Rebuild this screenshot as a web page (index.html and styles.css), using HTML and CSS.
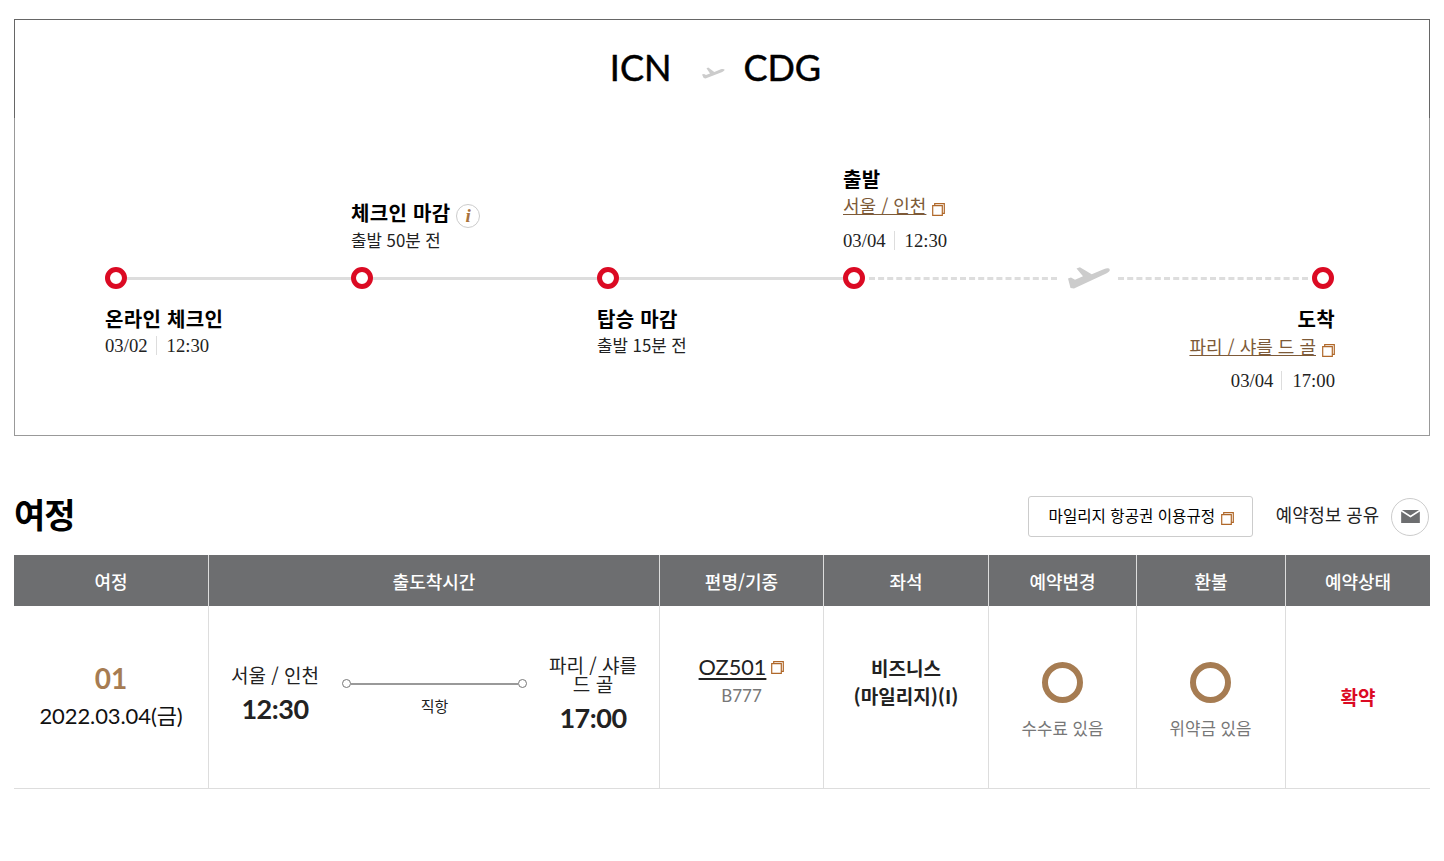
FILE: index.html
```html
<!DOCTYPE html>
<html lang="ko">
<head>
<meta charset="utf-8">
<title>여정</title>
<link rel="stylesheet" href="styles.css">
</head>
<body>
<section class="summary">
  <h1 class="route">
    <span>ICN</span>
    <svg class="route-plane" viewBox="0 0 24 14"><path d="M1 9.500 3 9l2 1 4-1.600L5.500 3.200 7.300 2.600l6 4.300 6.500-2.600c1.700-.6 3.300-.5 3.700.3.300.8-.6 1.700-2.200 2.400L4.500 13.500 2.700 13z"/></svg>
    <span>CDG</span>
  </h1>
  <div class="timeline">
    <div class="slot"></div>
    <div class="slot">
      <div class="title">체크인 마감 <span class="info">i</span></div>
      <div class="sub">출발 50분 전</div>
    </div>
    <div class="slot"></div>
    <div class="slot">
      <div class="title">출발</div>
      <div class="city-row"><a class="city">서울 / 인천</a><svg class="copy" viewBox="0 0 13 13"><path d="M.7 2.700h9.600v9.600H.7zM2.700 2.500V.7h9.600v9.600H10.500"/></svg></div>
      <div class="datetime"><span class="date">03/04</span><span>12:30</span></div>
    </div>
    <div class="slot"></div>

    <div class="track"><i class="dot"></i><i class="line"></i></div>
    <div class="track"><i class="dot"></i><i class="line"></i></div>
    <div class="track"><i class="dot"></i><i class="line"></i></div>
    <div class="track"><i class="dot"></i><i class="dash dash-left"></i>
      <svg class="track-plane" viewBox="0 0 44 24"><path d="M1 12.500 4 11.500l4 2.200 8-3.400L9.500 2.500l3.400-1.200 11.800 7 12.500-5.300c2.800-1.100 5-.8 5.500.4.500 1.300-1 2.800-3.500 4L7 22.500l-3.500-.5z"/></svg>
      <i class="dash"></i></div>
    <div class="track"><i class="dot"></i></div>

    <div class="slot below">
      <div class="title">온라인 체크인</div>
      <div class="datetime"><span class="date">03/02</span><span>12:30</span></div>
    </div>
    <div class="slot below"></div>
    <div class="slot below">
      <div class="title">탑승 마감</div>
      <div class="sub">출발 15분 전</div>
    </div>
    <div class="slot below arrive">
      <div class="title">도착</div>
      <div class="city-row"><a class="city">파리 / 샤를 드 골</a><svg class="copy" viewBox="0 0 13 13"><path d="M.7 2.700h9.600v9.600H.7zM2.700 2.500V.7h9.600v9.600H10.500"/></svg></div>
      <div class="datetime"><span class="date">03/04</span><span>17:00</span></div>
    </div>
  </div>
</section>

<section class="itinerary">
  <header class="it-head">
    <h2>여정</h2>
    <div class="it-actions">
      <button class="rule-btn">마일리지 항공권 이용규정<svg class="copy" viewBox="0 0 13 13"><path d="M.7 2.700h9.600v9.600H.7zM2.700 2.500V.7h9.600v9.600H10.500"/></svg></button>
      <span class="share-label">예약정보 공유</span>
      <span class="share-btn"><svg viewBox="0 0 20 15"><path d="M0 1.500 10 8l10-6.500V14H0zM.8 0h18.400L10 6z"/></svg></span>
    </div>
  </header>
  <table>
    <colgroup>
      <col class="c1"><col class="c2"><col class="c3"><col class="c4"><col class="c5"><col class="c6"><col class="c7">
    </colgroup>
    <thead>
      <tr><th>여정</th><th>출도착시간</th><th>편명/기종</th><th>좌석</th><th>예약변경</th><th>환불</th><th>예약상태</th></tr>
    </thead>
    <tbody>
      <tr>
        <td><div class="seq">01</div><div class="flight-date">2022.03.04(금)</div></td>
        <td>
          <div class="times">
            <div class="end end-from"><div class="end-city">서울 / 인천</div><div class="end-time">12:30</div></div>
            <div class="path"><div class="path-line"><i></i><b></b><i></i></div><div class="path-label">직항</div></div>
            <div class="end end-to"><div class="end-city">파리 / 샤를<br>드 골</div><div class="end-time">17:00</div></div>
          </div>
        </td>
        <td class="top"><a class="flight-no">OZ501</a><svg class="copy" viewBox="0 0 13 13"><path d="M.7 2.700h9.600v9.600H.7zM2.700 2.500V.7h9.600v9.600H10.500"/></svg><div class="aircraft">B777</div></td>
        <td class="seat">비즈니스<br>(마일리지)(I)</td>
        <td><i class="ring"></i><div class="note">수수료 있음</div></td>
        <td class="refund"><i class="ring"></i><div class="note">위약금 있음</div></td>
        <td class="status">확약</td>
      </tr>
    </tbody>
  </table>
</section>
</body>
</html>
```
FILE: styles.css
```css
* { box-sizing: border-box; }
html, body { margin: 0; padding: 0; background: #fff; }
body {
  padding: 19px 14px 0;
  font-family: "Noto Sans CJK KR", "Noto Sans", sans-serif;
  color: #000;
}
.summary {
  height: 417px;
  border: 1px solid #999;
  border-top: 0;
}
.route {
  margin: 0 -1px;
  height: 99px;
  padding: 0 13px 4px 0;
  border: 1px solid #666;
  border-bottom: 0;
  display: flex;
  justify-content: center;
  align-items: center;
  font: 400 36px/48px Lato, sans-serif;
  -webkit-text-stroke: .5px #000;
  color: #000;
}
.route-plane { width: 24px; height: 16px; fill: #ccc; margin: 10px 18px 0 30px; }
.timeline {
  display: grid;
  grid-template-columns: 246px 246px 246px 469px 22px;
  grid-template-rows: 148px 24px auto;
  margin-left: 90px;
}
.slot { align-self: end; padding-bottom: 14px; }
.title { font-size: 20px; line-height: 26px; font-weight: 700; letter-spacing: .3px; white-space: nowrap; }
.sub { font-size: 16.800px; line-height: 24px; color: #222; margin-top: 2px; white-space: nowrap; }
.info {
  display: inline-block;
  width: 24px; height: 24px;
  border: 1px solid #ccc;
  border-radius: 50%;
  vertical-align: -1px;
  margin: -4px 0 -4px 0;
  text-align: center;
  font: italic 700 19px/22px "Liberation Serif", serif;
  color: #a8733c;
}
.city-row { margin-top: 2px; }
.city {
  font-size: 18px;
  line-height: 21px;
  color: #7d5a38;
  text-decoration: underline;
  text-underline-offset: 1px;
  white-space: nowrap;
}
.copy {
  width: 13px; height: 13px;
  margin-left: 6px;
  vertical-align: -3px;
  fill: none;
  stroke: #b0682a;
  stroke-width: 1.200;
}
.datetime {
  font: 18.700px/22px "Liberation Serif", serif;
  color: #222;
  margin-top: 12px;
  white-space: nowrap;
}
.date { display: inline-block; padding-right: 8px; margin-right: 10px; border-right: 1px solid #ddd; line-height: 19px; }
.track { display: flex; align-items: center; height: 24px; }
.dot {
  flex: none;
  width: 22px; height: 22px;
  border: 5px solid #db0a23;
  border-radius: 50%;
  background: #fff;
}
.line { flex: 1; height: 3px; background: #ddd; }
.dash {
  flex: 1;
  height: 0;
  border-top: 3px dashed #ddd;
  margin: 0 4px;
}
.dash-left { flex: none; width: 188px; margin-right: 0; }
.track-plane { flex: none; width: 44px; height: 24px; fill: #ccc; margin: 0 3px 0 10px; }
.below { align-self: start; padding: 16px 0 0; }
.below .datetime { margin-top: 3px; }
.below .sub { margin-top: 1px; }
.arrive {
  grid-column: 4 / 6;
  text-align: right;
  margin-right: -1px;
}
.arrive .city-row { margin-top: 3px; }
.arrive .datetime { margin-top: 11px; }

.itinerary { margin-top: 55px; }
.it-head { display: flex; justify-content: space-between; align-items: center; height: 64px; padding-bottom: 18px; }
h2 { margin: 0; font-size: 34px; line-height: 46px; font-weight: 700; letter-spacing: -1px; }
.it-actions { display: flex; align-items: center; margin: 6px 1px 0 0; }
.rule-btn {
  height: 41px;
  width: 225px;
  margin-top: -2px;
  background: #fff;
  border: 1px solid #ccc;
  border-radius: 3px;
  font: 15.600px "Noto Sans CJK KR", sans-serif;
  color: #000;
  padding: 0 0 2px 2px;
}
.share-label { margin: 0 0 6px 23px; font-size: 17.800px; color: #222; white-space: nowrap; }
.share-btn {
  width: 38px; height: 38px;
  margin-left: 12px;
  border: 1px solid #ccc;
  border-radius: 50%;
  display: flex; align-items: center; justify-content: center;
}
.share-btn svg { width: 19px; height: 14px; fill: #6d6e70; }

table { width: 1416px; border-collapse: collapse; table-layout: fixed; }
.c1 { width: 194.500px; } .c2 { width: 451px; } .c3 { width: 164px; } .c4 { width: 165px; }
.c5 { width: 148px; } .c6 { width: 149px; } .c7 { width: 144.500px; }
th {
  height: 51px;
  background: #6d6e70;
  color: #fff;
  font-size: 18px;
  font-weight: 500;
  border-left: 1px solid #ddd;
  padding: 0;
}
th:first-child { border-left: 0; }
td {
  height: 182px;
  padding: 0 0 2px;
  text-align: center;
  border-left: 1px solid #ddd;
  border-bottom: 1px solid #ddd;
  color: #222;
}
td:first-child { border-left: 0; }
.top { vertical-align: top; padding: 48px 0 0; }
.seq { font: 700 28px/36px Lato, sans-serif; color: #a67c52; }
.flight-date { font: 400 22px/32px Lato, "Noto Sans CJK KR", sans-serif; color: #111; margin-top: 4px; letter-spacing: -.1px; }
.times { display: flex; align-items: center; padding: 0 20px; }
.end { flex: none; width: 92px; }
.end-city { font-size: 19px; line-height: 19px; color: #222; white-space: nowrap; }
.end-time { font: 700 27px/36px Lato, sans-serif; color: #222; margin-top: 7px; letter-spacing: -.5px; }
.end-from { margin: 1px 21px 0 0; }
.end-to { margin-left: 20px; }
.path { flex: 1; margin-top: 4px; }
.path-line { display: flex; align-items: center; }
.path-line i { width: 9px; height: 9px; border: 1px solid #777; border-radius: 50%; }
.path-line b { flex: 1; height: 2px; background: #999; }
.path-label { font-size: 15px; line-height: 20px; margin-top: 8px; color: #222; }
.flight-no { font: 400 21.700px/27px Lato, sans-serif; color: #222; text-decoration: underline; text-underline-offset: 3px; }
.top .copy { margin-left: 5px; vertical-align: 1px; }
.aircraft { font: 17px/24px Lato, sans-serif; color: #777; margin-top: 3px; }
.seat { vertical-align: top; padding: 48px 0 0; font-size: 19px; line-height: 28px; font-weight: 700; color: #222; }
.ring {
  display: block;
  width: 41px; height: 41px;
  margin: 11px auto 0;
  border: 6px solid #a67c52;
  border-radius: 50%;
}
.refund { padding-right: 1px; }
.note { font-size: 16.800px; line-height: 24px; color: #777; margin-top: 13px; white-space: nowrap; }
.status { padding: 0; font-size: 19px; font-weight: 700; color: #db0a23; }
```
